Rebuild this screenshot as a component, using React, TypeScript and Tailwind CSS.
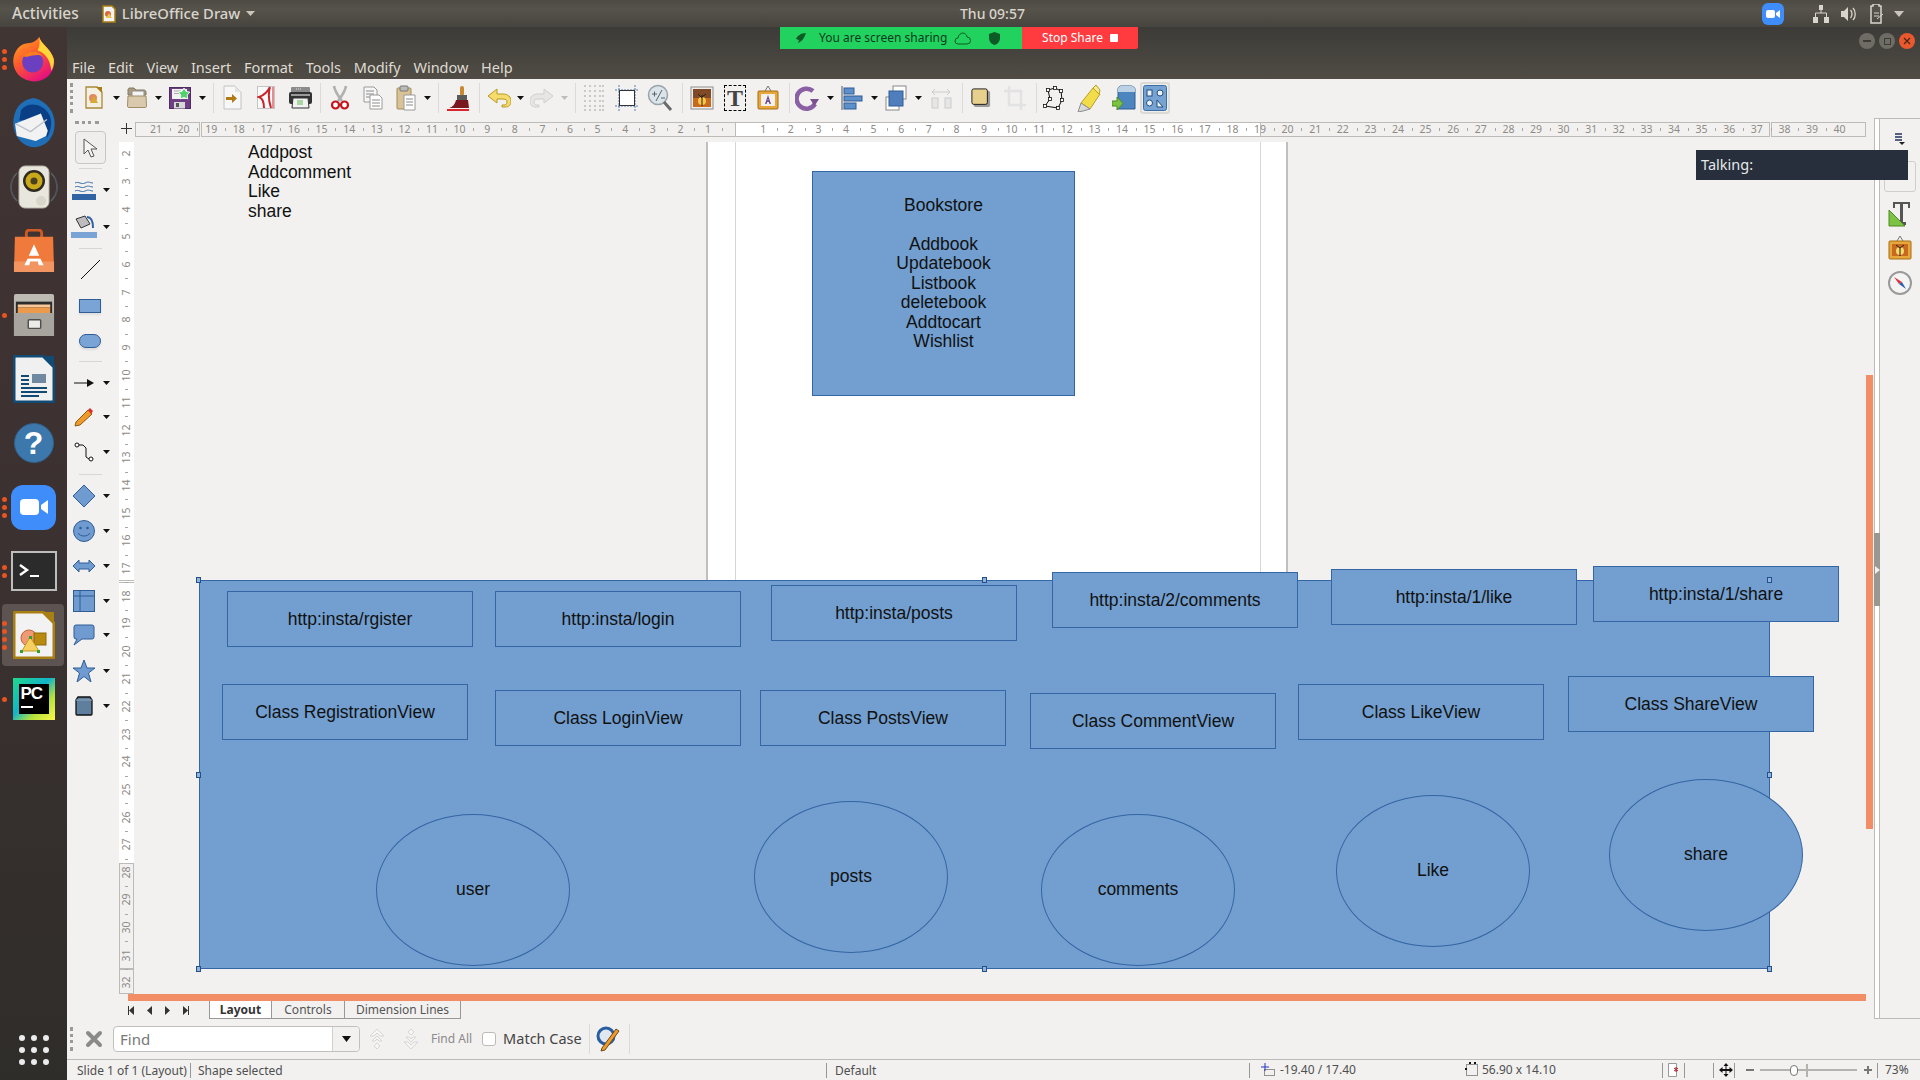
import type { ReactNode } from "react";

const UI = "font-['Noto_Sans',sans-serif]";

/* ---------- dock icons ---------- */
const Firefox = () => (
  <svg width="45" height="47" viewBox="0 0 54 58">
    <defs>
      <linearGradient id="ff" x1="0" y1="0" x2="0.6" y2="1">
        <stop offset="0" stopColor="#ffb01f" />
        <stop offset="0.5" stopColor="#ff5a2c" />
        <stop offset="1" stopColor="#e6127e" />
      </linearGradient>
    </defs>
    <path d="M34 1c1 8 14 14 18 27 3 14-8 28-24 28C13 56 2 45 2 31 2 20 10 9 20 9c6 0 11-3 14-8z" fill="url(#ff)" />
    <path d="M34 1c1 8 14 14 18 27 1 6-1 11-3 15-1-14-8-22-17-25 3-5 3-11 2-17z" fill="#ffd53a" />
    <circle cx="26" cy="32" r="13" fill="#6b3fbf" />
    <path d="M14 25c5-8 20-8 24 0-5-3-8-1-12-1s-7 3-12 1z" fill="#ff7b1f" />
  </svg>
);
const Thunderbird = () => (
  <svg width="48" height="50" viewBox="0 0 50 58">
    <path d="M25 0C9 2 1 14 1 29c0 16 12 29 26 28 13-1 22-12 22-27C49 16 40 4 25 0z" fill="#1f6fb8" />
    <path d="M10 14C18 4 34 6 42 18c5 8 3 20-2 28-1-12-9-22-32-20z" fill="#0a3f86" />
    <path d="M3 30l30-12 8 20-2 6-12 6-22-6z" fill="#f2f2f2" />
    <path d="M4 30l17 9 19-14" fill="none" stroke="#bcc3cc" strokeWidth="1.5" />
  </svg>
);
const Speaker = () => (
  <svg width="48" height="48" viewBox="0 0 48 48">
    <path d="M7 10c-8 8-8 20 0 28M41 10c8 8 8 20 0 28" fill="none" stroke="#5a6168" strokeWidth="1.500" />
    <path d="M4 14c-4 6-4 14 0 20M44 14c4 6 4 14 0 20" fill="none" stroke="#4c5056" />
    <rect x="9" y="3" width="30" height="42" rx="6" fill="#e9e7dd" stroke="#b8b4a8" />
    <circle cx="24" cy="18" r="11" fill="#2f2b1e" />
    <circle cx="24" cy="18" r="8.500" fill="#c9a91b" />
    <circle cx="24" cy="18" r="3.500" fill="#4a4120" />
    <circle cx="31" cy="38" r="5" fill="#d8d5cb" />
  </svg>
);
const Shop = () => (
  <svg width="42" height="44" viewBox="0 0 44 46">
    <path d="M14 10V4c0-2 2-3 4-3h8c2 0 4 1 4 3v6" fill="none" stroke="#cf5a23" strokeWidth="3" />
    <path d="M2 8h40l1 37H1z" fill="#ef7a3b" />
    <path d="M1 34h42v11H1z" fill="#f29560" />
    <path d="M22 16l-10 22h5l1-4h8l1 4h5z" fill="#fff" />
    <path d="M14 28h16v3H14z" fill="#ef7a3b" />
  </svg>
);
const Cabinet = () => (
  <svg width="42" height="44" viewBox="0 0 44 46">
    <rect x="1" y="1" width="42" height="44" rx="2" fill="#bdbab3" />
    <rect x="3" y="9" width="38" height="12" fill="#2c2c2c" />
    <rect x="5" y="12" width="34" height="3" fill="#f7c89a" />
    <rect x="5" y="15" width="34" height="6" fill="#ee9a4d" />
    <path d="M1 21h42v24H1z" fill="#a8a59e" />
    <rect x="16" y="28" width="13" height="9" rx="1" fill="#ecebe7" stroke="#4f4f4f" strokeWidth="1.5" />
  </svg>
);
const Writer = () => (
  <svg width="42" height="48" viewBox="0 0 42 48">
    <path d="M3 1h27l11 11v33a2 2 0 01-2 2H3a2 2 0 01-2-2V3a2 2 0 012-2z" fill="#f0f0f0" stroke="#114a75" strokeWidth="3" />
    <path d="M29 1h11a1 1 0 011 1v11z" fill="#114a75" />
    <rect x="19" y="19" width="14" height="9" fill="#6f8aa0" />
    <path d="M8 20h8v2H8zm0 4h8v2H8zm0 4h8v2H8zM8 32h26v2H8zm0 4h26v2H8zm0 4h18v2H8z" fill="#114a75" />
  </svg>
);
const Help = () => (
  <div className="w-[40px] h-[40px] rounded-full bg-[#3d78ad] border border-[#2f608c] flex items-center justify-center">
    <span className="text-white text-[32px] leading-none font-bold font-['Liberation_Sans',sans-serif]">?</span>
  </div>
);
const ZoomApp = () => (
  <div className="w-[45px] h-[45px] rounded-[12px] bg-[#3f8cfb] flex items-center justify-center">
    <svg width="28" height="18" viewBox="0 0 28 18">
      <rect x="0" y="1" width="19" height="16" rx="4" fill="#fff" />
      <path d="M21 7l7-5v14l-7-5z" fill="#fff" />
    </svg>
  </div>
);
const Terminal = () => (
  <div className="w-[46px] h-[40px] bg-[#2b2b2b] border-2 border-[#bdbdbd] flex items-center justify-start pl-[6px]">
    <svg width="24" height="16" viewBox="0 0 24 16">
      <path d="M1 2l7 5-7 5" fill="none" stroke="#fff" strokeWidth="2.4" />
      <path d="M11 13h9" stroke="#fff" strokeWidth="2" />
    </svg>
  </div>
);
const DrawApp = () => (
  <svg width="42" height="48" viewBox="0 0 42 48">
    <path d="M3 1h27l11 11v33a2 2 0 01-2 2H3a2 2 0 01-2-2V3a2 2 0 012-2z" fill="#f2f2f2" stroke="#a87f12" strokeWidth="3" />
    <path d="M29 1h11a1 1 0 011 1v11z" fill="#a87f12" />
    <circle cx="16" cy="27" r="8" fill="#ef9a74" stroke="#c2653c" />
    <rect x="21" y="22" width="12" height="12" fill="#b88a10" stroke="#8f6a08" />
    <path d="M17 26l9 14H9z" fill="#f6cf5e" stroke="#c49b22" />
    <path d="M16 25h3v3h-3zM7 39h3v3H7zM24 39h3v3h-3z" fill="#32a02c" />
  </svg>
);
const PyCharm = () => (
  <div className="w-[42px] h-[42px] bg-[linear-gradient(135deg,#21d789_0%,#12b5c9_45%,#b7e23b_70%,#fcf84a_100%)] flex items-center justify-center">
    <div className="w-[30px] h-[30px] bg-black flex flex-col pl-[2px] pt-px">
      <span className="text-white text-[17px] leading-[18px] font-bold tracking-[-1px] font-['Liberation_Sans',sans-serif]">PC</span>
      <div className="w-[12px] h-[2px] bg-white mt-[3px]" />
    </div>
  </div>
);

const DockItem = ({ dots = 0, active, children }: { dots?: number; active?: boolean; children: ReactNode }) => (
  <div className="relative h-[64px] flex items-center justify-center shrink-0">
    {active && <div className="absolute left-[2px] right-[3px] top-[1px] bottom-[1px] rounded-[4px] bg-[#5d5350]" />}
    <div className="absolute left-[2px] top-0 bottom-0 flex flex-col justify-center gap-[3px]">
      {Array.from({ length: dots }).map((_, i) => (
        <span key={i} className="w-[5px] h-[5px] rounded-full bg-[#e95420]" />
      ))}
    </div>
    <div className="relative">{children}</div>
  </div>
);

const Dock = () => (
  <div className="w-[67px] shrink-0 bg-[linear-gradient(180deg,#413534_0%,#3b3130_50%,#2f2d2a_100%)] flex flex-col">
    <DockItem dots={3}><Firefox /></DockItem>
    <DockItem><Thunderbird /></DockItem>
    <DockItem><Speaker /></DockItem>
    <DockItem><Shop /></DockItem>
    <DockItem dots={1}><Cabinet /></DockItem>
    <DockItem><Writer /></DockItem>
    <DockItem><Help /></DockItem>
    <DockItem dots={3}><ZoomApp /></DockItem>
    <DockItem dots={2}><Terminal /></DockItem>
    <DockItem dots={4} active><DrawApp /></DockItem>
    <DockItem dots={1}><PyCharm /></DockItem>
    <div className="mt-auto mb-[15px] mx-auto grid grid-cols-3 gap-x-[6px] gap-y-[6px]">
      {Array.from({ length: 9 }).map((_, i) => (
        <span key={i} className="w-[6px] h-[6px] rounded-full bg-[#ececec]" />
      ))}
    </div>
  </div>
);

/* ---------- small helpers ---------- */
const Caret = ({ light }: { light?: boolean }) => (
  <svg width="7" height="4" viewBox="0 0 7 4"><path d="M0 0h7L3.5 4z" fill={light ? "#bdbdbd" : "#111"} /></svg>
);
const Slot = ({ w, children }: { w: string; children?: ReactNode }) => (
  <div className={`flex items-center justify-center shrink-0 ${w}`}>{children}</div>
);
const Sep = ({ w }: { w: string }) => (
  <Slot w={w}><div className="w-px h-[30px] bg-[#dcdad7]" /></Slot>
);

/* ---------- toolbar icons ---------- */
const PageDraw = () => (
  <svg width="18" height="23" viewBox="0 0 18 23">
    <path d="M1 1h11l5 5v16H1z" fill="#f3efe2" stroke="#a88a3a" strokeWidth="1.300" />
    <path d="M11 1h6v6z" fill="#a87f12" />
    <circle cx="8" cy="12" r="4" fill="#e08a63" />
    <path d="M9 10l4 7H5z" fill="#d9a92f" />
  </svg>
);
const OpenIc = () => (
  <svg width="20" height="21" viewBox="0 0 20 21">
    <path d="M1 3c0-1 .5-2 1.500-2H7l2 2h8c1 0 2 1 2 2v3H1z" fill="#a89a80" stroke="#85785f" />
    <path d="M5 4h12v6H5z" fill="#f5f5f5" stroke="#8f8f8f" />
    <path d="M1 9h18l.5 10c0 1-.5 1.500-1.500 1.500H2C1 20.500.5 20 .5 19z" fill="#dac9ac" stroke="#a08c66" />
  </svg>
);
const SaveIc = () => (
  <svg width="22" height="22" viewBox="0 0 22 22">
    <rect x=".5" y=".5" width="21" height="21" fill="#6f3f83" stroke="#4f2c62" />
    <rect x="3" y="2" width="15" height="10" fill="#f2f2f2" />
    <path d="M5 4h7M5 6.500h5" stroke="#aaa" />
    <rect x="5" y="15" width="11" height="6.500" fill="#d8d8d8" />
    <rect x="7" y="16" width="3" height="4" fill="#555" />
    <path d="M15 1l2 3.400 3.800.7-2.600 2.900.5 3.900L15 10.400l-3.700 1.500.5-3.900-2.600-2.900 3.800-.7z" fill="#4fd36a" stroke="#fff" strokeWidth=".9" />
  </svg>
);
const ImportIc = () => (
  <svg width="19" height="25" viewBox="0 0 19 25">
    <path d="M1 1h11l6 6v17H1z" fill="#f7f7f7" stroke="#c2c2c2" />
    <path d="M12 1l6 6h-6z" fill="#e4e4e4" />
    <path d="M3 12h6V9l5 4.500L9 18v-3H3z" fill="#b17a12" />
  </svg>
);
const PdfIc = () => (
  <svg width="18" height="23" viewBox="0 0 18 23">
    <rect x=".5" y=".5" width="17" height="22" fill="#fafafa" stroke="#c4c4c4" />
    <path d="M13 1C11 5 8 9 2 11c3 1 5 4 5 11M13 1c-2 7-1 15 1 21" fill="none" stroke="#c9252a" strokeWidth="2" />
    <path d="M16 1v21" stroke="#c9252a" />
  </svg>
);
const PrintIc = () => (
  <svg width="25" height="23" viewBox="0 0 25 23">
    <rect x="3" y="1" width="19" height="6" rx="1" fill="#8c8c8c" />
    <path d="M8 3h6" stroke="#e0e0e0" strokeDasharray="1 1" />
    <rect x="1" y="6" width="23" height="12" rx="2" fill="#333" />
    <rect x="3" y="8" width="19" height="2" fill="#9a9a9a" />
    <path d="M5 12h15l1 10H4z" fill="#f2f2f2" stroke="#333" />
    <path d="M9 14h6v5H9z" fill="#a8d6a0" />
  </svg>
);
const CutIc = () => (
  <svg width="18" height="25" viewBox="0 0 18 25">
    <path d="M3 1c1 6 5 11 8 15M15 1c-1 6-5 11-8 15" fill="none" stroke="#b0b0b0" strokeWidth="2.600" />
    <circle cx="4.500" cy="20" r="3.500" fill="#fff" stroke="#c4161c" strokeWidth="2.200" />
    <circle cx="13.500" cy="20" r="3.500" fill="#fff" stroke="#c4161c" strokeWidth="2.200" />
  </svg>
);
const CopyIc = () => (
  <svg width="20" height="24" viewBox="0 0 20 24">
    <path d="M1 1h10l3 3v12H1z" fill="#f6f6f6" stroke="#9a9a9a" />
    <path d="M3 5h8M3 8h8M3 11h8" stroke="#8a8a8a" />
    <path d="M7 9h9l3 3v11H7z" fill="#fff" stroke="#9a9a9a" />
    <path d="M9 14h8M9 17h8M9 20h8" stroke="#8a8a8a" />
  </svg>
);
const PasteIc = () => (
  <svg width="20" height="26" viewBox="0 0 20 26">
    <rect x="1" y="3" width="14" height="21" rx="1" fill="#d9c295" stroke="#a58b54" />
    <rect x="4" y="1" width="8" height="5" rx="1" fill="#bbb" stroke="#777" />
    <path d="M8 10h11v15H8z" fill="#fff" stroke="#9a9a9a" />
    <path d="M10 14h7M10 17h7M10 20h7" stroke="#888" />
  </svg>
);
const BrushIc = () => (
  <svg width="24" height="26" viewBox="0 0 24 26">
    <rect x="14" y="1" width="4" height="10" rx="2" fill="#c9892e" />
    <rect x="11" y="10" width="10" height="5" fill="#5a5a5a" />
    <path d="M10 15h12l1 8H3c4-1 6-4 7-8z" fill="#7a1820" />
    <path d="M1 24h22v2H1z" fill="#d9262e" />
  </svg>
);
const UndoIc = ({ flip, dim }: { flip?: boolean; dim?: boolean }) => (
  <svg width="24" height="20" viewBox="0 0 24 20" className={flip ? "-scale-x-100" : ""}>
    <path
      d="M10 1L1 8l9 7v-4h6c3 0 4 1 4 3s-1 3-3 3h-2v2h3c4 0 6-2 6-6s-3-7-8-7h-6z"
      fill={dim ? "#e6e6e6" : "#f6dc6c"}
      stroke={dim ? "#cfcfcf" : "#b79a22"}
    />
  </svg>
);
const GridIc = () => (
  <svg width="20" height="26" viewBox="0 0 20 26">
    {[1, 6, 11, 16, 21, 25].map((y) => [1, 6, 11, 16, 19].map((x) => <rect key={`${x}-${y}`} x={x - 0.5} y={y - 0.5} width="1" height="1" fill="#555" />))}
  </svg>
);
const HelpLinesIc = () => (
  <svg width="24" height="26" viewBox="0 0 24 26">
    <path d="M4 0v26M20 0v26M0 5h24M0 21h24" stroke="#5b7fb3" strokeDasharray="2 1" />
    <rect x="4.500" y="5.500" width="15" height="15" fill="#fff" stroke="#333" />
  </svg>
);
const ZoomIc = () => (
  <svg width="26" height="28" viewBox="0 0 26 28">
    <circle cx="11" cy="11" r="9.500" fill="#dbe4ea" stroke="#98a3aa" strokeWidth="1.500" />
    <path d="M5 10h5M7.500 7.500v5M14 14h4M9 17l6-11" stroke="#5a6368" />
    <path d="M17 18l7 8" stroke="#6a6a6a" strokeWidth="3" />
  </svg>
);
const ImageIc = () => (
  <svg width="24" height="24" viewBox="0 0 24 24">
    <rect x="1" y="1" width="22" height="22" fill="#eee" stroke="#8d8d8d" />
    <rect x="3" y="3" width="18" height="18" fill="#c76a1e" />
    <rect x="3" y="3" width="18" height="9" fill="#7f4a25" />
    <circle cx="12" cy="15" r="4" fill="#f7c64d" />
    <path d="M12 20V9M12 12l-4-4M12 11l4-3" stroke="#2d1d10" />
  </svg>
);
const TextIc = () => (
  <div className="w-[22px] h-[26px] border border-dashed border-black flex items-center justify-center">
    <span className="text-[24px] leading-none font-bold text-[#444] font-['Liberation_Serif',serif]">T</span>
  </div>
);
const FontworkIc = () => (
  <svg width="22" height="24" viewBox="0 0 22 24">
    <path d="M11 0l-3 5M11 0l3 5" stroke="#777" />
    <rect x="1" y="5" width="20" height="18" rx="1" fill="#e7a73c" stroke="#a56c12" />
    <rect x="4" y="8" width="14" height="12" fill="#f4f1ea" />
    <path d="M11 9l-3 9h1.500l.7-2h1.600l.7 2H14zm-.4 5.600l.4-2 .4 2z" fill="#6a4a98" />
  </svg>
);
const RotateIc = () => (
  <svg width="24" height="26" viewBox="0 0 24 26">
    <path d="M20 19a10 10 0 11-2-13" fill="none" stroke="#8a5fa3" strokeWidth="4.500" />
    <path d="M15 14h9l-4.500 7z" fill="#7c4f93" />
  </svg>
);
const AlignIc = () => (
  <svg width="22" height="24" viewBox="0 0 22 24">
    <path d="M1 0v24" stroke="#555" />
    <rect x="3" y="2" width="10" height="6" fill="#5d8fc9" stroke="#2f5d97" />
    <rect x="3" y="10" width="18" height="5" fill="#5d8fc9" stroke="#2f5d97" />
    <rect x="3" y="17" width="12" height="6" fill="#5d8fc9" stroke="#2f5d97" />
  </svg>
);
const ArrangeIc = () => (
  <svg width="22" height="26" viewBox="0 0 22 26">
    <rect x="8" y="1" width="13" height="13" fill="#fff" stroke="#888" />
    <rect x="1" y="12" width="13" height="13" fill="#fff" stroke="#888" />
    <rect x="4" y="6" width="14" height="15" fill="#4e7fbc" stroke="#2f5d97" />
  </svg>
);
const DistIc = () => (
  <svg width="24" height="24" viewBox="0 0 24 24">
    <path d="M3 6h18M3 6l3-3M3 6l3 3M21 6l-3-3M21 6l-3 3" stroke="#ccc" fill="none" />
    <rect x="3" y="12" width="6" height="10" fill="#e6e6e6" stroke="#ccc" />
    <rect x="16" y="12" width="6" height="10" fill="#e6e6e6" stroke="#ccc" />
  </svg>
);
const ShadowIc = () => (
  <svg width="22" height="22" viewBox="0 0 22 22">
    <rect x="3" y="3" width="18" height="18" rx="2" fill="#9a9a9a" />
    <rect x="1" y="1" width="17" height="17" rx="2" fill="#e7d08e" stroke="#111" />
  </svg>
);
const CropIc = () => (
  <svg width="22" height="24" viewBox="0 0 22 24">
    <path d="M5 0v19h17M0 5h17v19" fill="none" stroke="#e2e2e2" strokeWidth="2.500" />
  </svg>
);
const PointsIc = () => (
  <svg width="22" height="24" viewBox="0 0 22 24">
    <path d="M5 4l7-2 6 3 1 9-4 8-13-2 5-7z" fill="none" stroke="#111" />
    {[[5, 4], [12, 2], [18, 5], [19, 14], [15, 22], [2, 20], [7, 13]].map(([x, y]) => (
      <rect key={`${x}${y}`} x={x - 1.5} y={y - 1.5} width="3" height="3" fill="#fff" stroke="#111" strokeWidth=".8" />
    ))}
  </svg>
);
const GlueIc = () => (
  <svg width="24" height="28" viewBox="0 0 24 28">
    <path d="M4 19L16 4l7 6-10 15z" fill="#f2dc4a" stroke="#b79f22" />
    <path d="M16 4l3-3 4 5-1 4z" fill="#f6ea8e" stroke="#b79f22" />
    <path d="M4 19l9 6-7 2-5 1z" fill="#d9d9d9" stroke="#8c8c8c" />
  </svg>
);
const ExtrudeIc = () => (
  <svg width="24" height="26" viewBox="0 0 24 26">
    <path d="M6 4c0-2 2-3 3-3h10c2 0 4 2 4 3v20H6z" fill="#4d86bf" stroke="#2e5f93" />
    <path d="M6 4c0-2 2-3 3-3h10c2 0 4 2 4 3v3H6z" fill="#bcd1e4" />
    <path d="M0 16h5v-4l6 6.500L5 25v-4H0z" fill="#7cc243" stroke="#4f8a20" />
  </svg>
);
const ShapesToggle = () => (
  <div className="w-[30px] h-[32px] rounded-[3px] border-2 border-[#dcdad6] bg-[#eeeeec] flex items-center justify-center shrink-0">
    <svg width="24" height="26" viewBox="0 0 24 26">
      <rect x=".5" y=".5" width="23" height="25" rx="2" fill="#77a3d3" stroke="#3b6ea7" />
      <rect x="4" y="5" width="5" height="6" fill="#eaf1f8" stroke="#234d7d" />
      <circle cx="17" cy="8" r="3" fill="#eaf1f8" stroke="#234d7d" />
      <circle cx="6.500" cy="18" r="3" fill="#eaf1f8" stroke="#234d7d" />
      <path d="M14 22l0-7 6 7z" fill="#eaf1f8" stroke="#234d7d" />
    </svg>
  </div>
);

const MainToolbar = () => (
  <div className="h-[39px] shrink-0 bg-[#f2f1f0] flex items-center pb-[2px]">
    <div className="ml-[3px] mr-[7px] w-[4px] h-[30px] border-l-[3px] border-dotted border-[#9c9a97]" />
    <Slot w="w-[26px]"><PageDraw /></Slot>
    <Slot w="w-[18px]"><Caret /></Slot>
    <Slot w="w-[24px]"><OpenIc /></Slot>
    <Slot w="w-[18px]"><Caret /></Slot>
    <Slot w="w-[26px]"><SaveIc /></Slot>
    <Slot w="w-[18px]"><Caret /></Slot>
    <Sep w="w-[4px]" />
    <Slot w="w-[34px]"><ImportIc /></Slot>
    <Slot w="w-[34px]"><PdfIc /></Slot>
    <Slot w="w-[34px]"><PrintIc /></Slot>
    <Sep w="w-[6px]" />
    <Slot w="w-[34px]"><CutIc /></Slot>
    <Slot w="w-[32px]"><CopyIc /></Slot>
    <Slot w="w-[34px]"><PasteIc /></Slot>
    <Slot w="w-[8px]"><Caret /></Slot>
    <Sep w="w-[14px]" />
    <Slot w="w-[26px]"><BrushIc /></Slot>
    <Sep w="w-[16px]" />
    <Slot w="w-[24px]"><UndoIc /></Slot>
    <Slot w="w-[18px]"><Caret /></Slot>
    <Slot w="w-[26px]"><UndoIc flip dim /></Slot>
    <Slot w="w-[18px]"><Caret light /></Slot>
    <Sep w="w-[4px]" />
    <Slot w="w-[34px]"><GridIc /></Slot>
    <Slot w="w-[32px]"><HelpLinesIc /></Slot>
    <Slot w="w-[34px]"><ZoomIc /></Slot>
    <Sep w="w-[10px]" />
    <Slot w="w-[30px]"><ImageIc /></Slot>
    <Slot w="w-[36px]"><TextIc /></Slot>
    <Slot w="w-[30px]"><FontworkIc /></Slot>
    <Sep w="w-[12px]" />
    <Slot w="w-[24px]"><RotateIc /></Slot>
    <Slot w="w-[22px]"><Caret /></Slot>
    <Slot w="w-[22px]"><AlignIc /></Slot>
    <Slot w="w-[22px]"><Caret /></Slot>
    <Slot w="w-[22px]"><ArrangeIc /></Slot>
    <Slot w="w-[22px]"><Caret /></Slot>
    <Slot w="w-[24px]"><DistIc /></Slot>
    <Sep w="w-[18px]" />
    <Slot w="w-[20px]"><ShadowIc /></Slot>
    <div className="w-[4px]" />
    <Slot w="w-[40px]"><CropIc /></Slot>
    <Sep w="w-[2px]" />
    <Slot w="w-[34px]"><PointsIc /></Slot>
    <Slot w="w-[36px]"><GlueIc /></Slot>
    <Slot w="w-[34px]"><ExtrudeIc /></Slot>
    <Slot w="w-[28px]"><ShapesToggle /></Slot>
  </div>
);

/* ---------- left drawing toolbar ---------- */
const blueFill = "#6f9bd0";
const blueLine = "#2f5d97";
const Row = ({ h, arrow, children }: { h: string; arrow?: boolean; children?: ReactNode }) => (
  <div className={`flex items-center shrink-0 ${h}`}>
    <div className="w-[34px] flex justify-center">{children}</div>
    {arrow && <div className="w-[10px] flex justify-center"><Caret /></div>}
  </div>
);
// plain shape tools have no dropdown, so they sit further right than the others
const MidRow = ({ h, children }: { h: string; children?: ReactNode }) => (
  <div className={`flex items-center shrink-0 ${h}`}>
    <div className="w-[46px] flex justify-center">{children}</div>
  </div>
);
const VSep = ({ h }: { h: string }) => (
  <div className={`flex items-center shrink-0 ${h}`}><div className="ml-[12px] w-[23px] h-px bg-[#d8d6d3]" /></div>
);

const DrawToolbar = () => (
  <div className="w-[52px] shrink-0 flex flex-col pt-[3px] bg-[#f2f1f0]">
    <div className="ml-[8px] w-[24px] h-[3px] mb-[7px] border-t-[3px] border-dotted border-[#9c9a97]" />
    <MidRow h="h-[33px]">
      <div className="w-[31px] h-[33px] rounded-[4px] border border-[#c9c7c3] bg-[#efeeec] flex items-center justify-center shrink-0">
        <svg width="16" height="20" viewBox="0 0 16 20"><path d="M2 1v15l4-4 3 7 3-1-3-7h6z" fill="#f5f5f5" stroke="#555" /></svg>
      </div>
    </MidRow>
    <VSep h="h-[8px]" />
    <Row h="h-[36px]" arrow>
      <svg width="24" height="20" viewBox="0 0 24 20">
        <path d="M3 3c4-2 6 2 10 0s5 0 8 0M3 7c4-2 6 2 10 0s5 0 8 0M3 11c4-2 6 2 10 0s5 0 8 0" fill="none" stroke="#3a6ea8" />
        <rect y="14" width="24" height="6" fill="#2f63a3" />
      </svg>
    </Row>
    <Row h="h-[38px]" arrow>
      <svg width="26" height="24" viewBox="0 0 26 24">
        <path d="M5 4l9-3 5 8-9 4z" fill="#bdbdbd" stroke="#333" />
        <path d="M16 2c4 0 6 4 6 11" fill="none" stroke="#2f63a3" strokeWidth="2" />
        <rect y="17" width="26" height="6" fill="#7aa3d6" />
      </svg>
    </Row>
    <VSep h="h-[4px]" />
    <MidRow h="h-[38px]">
      <svg width="19" height="19" viewBox="0 0 19 19"><path d="M0 19L19 0" stroke="#111" /></svg>
    </MidRow>
    <MidRow h="h-[35px]">
      <div className="w-[22px] h-[14px] bg-[#7ba4d6] border border-[#2f5d97] shadow-[0_2px_2px_#ddd]" />
    </MidRow>
    <MidRow h="h-[36px]">
      <div className="w-[22px] h-[14px] rounded-full bg-[#7ba4d6] border border-[#2f5d97] shadow-[0_2px_2px_#ddd]" />
    </MidRow>
    <VSep h="h-[4px]" />
    <Row h="h-[40px]" arrow>
      <svg width="20" height="8" viewBox="0 0 20 8"><path d="M0 4h14" stroke="#111" /><path d="M13 0l7 4-7 4z" fill="#111" /></svg>
    </Row>
    <Row h="h-[28px]" arrow>
      <svg width="20" height="20" viewBox="0 0 20 20">
        <path d="M2 15L14 3l4 4L6 18l-5 1z" fill="#f09a2b" stroke="#8a5a12" />
        <path d="M14 3l2-2 3 3-2 3z" fill="#d9302e" />
      </svg>
    </Row>
    <Row h="h-[42px]" arrow>
      <svg width="20" height="20" viewBox="0 0 20 20">
        <path d="M5 3h4l3 3v9l3 2" fill="none" stroke="#111" />
        <rect x="1" y="1" width="4" height="4" rx="2" fill="#fff" stroke="#111" />
        <rect x="15" y="15" width="4" height="4" rx="2" fill="#fff" stroke="#111" />
      </svg>
    </Row>
    <VSep h="h-[2px]" />
    <Row h="h-[42px]" arrow>
      <svg width="22" height="22" viewBox="0 0 22 22"><path d="M11 0l11 11-11 11L0 11z" fill={blueFill} stroke={blueLine} /></svg>
    </Row>
    <Row h="h-[28px]" arrow>
      <svg width="22" height="22" viewBox="0 0 22 22">
        <circle cx="11" cy="11" r="10.500" fill={blueFill} stroke={blueLine} />
        <circle cx="7.500" cy="8" r="1.300" fill={blueLine} />
        <circle cx="14.500" cy="8" r="1.300" fill={blueLine} />
        <path d="M5 13c2 4 10 4 12 0" fill="none" stroke={blueLine} />
      </svg>
    </Row>
    <Row h="h-[42px]" arrow>
      <svg width="22" height="14" viewBox="0 0 22 14"><path d="M0 7l6-6v3h10V1l6 6-6 6v-3H6v3z" fill={blueFill} stroke={blueLine} /></svg>
    </Row>
    <Row h="h-[28px]" arrow>
      <svg width="22" height="22" viewBox="0 0 22 22">
        <rect x=".5" y=".5" width="21" height="21" fill={blueFill} stroke={blueLine} />
        <path d="M.5 6h21M7 .5v21" stroke={blueLine} />
      </svg>
    </Row>
    <Row h="h-[40px]" arrow>
      <svg width="22" height="22" viewBox="0 0 22 22"><path d="M3 1h16a2 2 0 012 2v10a2 2 0 01-2 2H9l-8 6 3-6H3a2 2 0 01-2-2V3a2 2 0 012-2z" fill={blueFill} stroke={blueLine} /></svg>
    </Row>
    <Row h="h-[32px]" arrow>
      <svg width="22" height="22" viewBox="0 0 22 22"><path d="M11 0l3 8h8l-6.500 5 2.500 9-7-5.500L4 22l2.500-9L0 8h8z" fill={blueFill} stroke={blueLine} /></svg>
    </Row>
    <Row h="h-[38px]" arrow>
      <svg width="18" height="20" viewBox="0 0 18 20">
        <path d="M3 1h12l2 3v14a1 1 0 01-1 1H2a1 1 0 01-1-1V4z" fill="#5f7f9f" stroke="#111" strokeWidth="1.300" />
        <path d="M1 4h16" stroke="#8ea6bd" />
      </svg>
    </Row>
  </div>
);

/* ---------- rulers ---------- */
const hNums = Array.from({ length: 62 }, (_, i) => i - 21).filter((n) => n !== 0);
const vNums = Array.from({ length: 31 }, (_, i) => i + 2);

const HRuler = () => (
  <div className="h-[20px] shrink-0 flex">
    <div className="w-[16px] shrink-0 relative">
      <div className="absolute left-[2px] top-[6px] w-[11px] h-px bg-[#333]" />
      <div className="absolute left-[7px] top-px w-px h-[11px] bg-[#333]" />
    </div>
    <div className="w-[1731px] shrink-0 relative h-[15px]">
      <div className="absolute inset-0 flex">
        <div className="w-[65px] border border-[#bdbbb8]" />
        <div className="w-[535px] ml-px border border-[#bdbbb8]" />
        <div className="w-[524px] bg-white border-y border-[#bdbbb8]" />
        <div className="w-[510px] border border-[#bdbbb8]" />
        <div className="w-[95px] ml-[1px] border border-[#bdbbb8]" />
      </div>
      {hNums.map((n) => (
        <span
          key={n}
          className="absolute top-0 w-[20px] -ml-[10px] text-center text-[10.5px] leading-[15px] text-[#8e8a86]"
          style={{ left: 600.6 + 27.6 * n }}
        >
          {Math.abs(n)}
        </span>
      ))}
      {hNums.slice(0, -1).map((n) => (
        <span key={n} className="absolute top-[6px] w-px h-[3px] bg-[#a9a7a4]" style={{ left: 600.6 + 27.6 * n + 13.8 }} />
      ))}
    </div>
  </div>
);

const VRuler = () => (
  <div className="w-[15px] shrink-0 relative overflow-hidden">
    <div className="absolute inset-0 flex flex-col">
      <div className="h-[721px] bg-white" />
      <div className="h-[106px] border border-[#bdbbb8]" />
      <div className="h-[25px] border border-[#bdbbb8]" />
    </div>
    <div className="absolute left-0 right-0 top-[438px] h-px bg-[#bdbbb8]" />
    <div className="absolute left-0 right-0 top-[440px] h-px bg-[#bdbbb8]" />
    {vNums.map((n) => (
      <span
        key={n}
        className="absolute left-0 w-[15px] h-[15px] -mt-[7.500px] -rotate-90 text-center text-[10.5px] leading-[15px] text-[#8e8a86]"
        style={{ top: -43.3 + 27.63 * n }}
      >
        {n}
      </span>
    ))}
    {vNums.map((n) => (
      <span key={n} className="absolute left-[6px] w-[3px] h-px bg-[#a9a7a4]" style={{ top: -43.3 + 27.63 * n + 13.8 }} />
    ))}
  </div>
);

/* ---------- slide canvas ---------- */
const rects = [
  { t: "http:insta/rgister", c: "left-[93px] top-[449px]" },
  { t: "http:insta/login", c: "left-[361px] top-[449px]" },
  { t: "http:insta/posts", c: "left-[637px] top-[443px]" },
  { t: "http:insta/2/comments", c: "left-[918px] top-[430px]" },
  { t: "http:insta/1/like", c: "left-[1197px] top-[427px]" },
  { t: "http:insta/1/share", c: "left-[1459px] top-[424px]" },
  { t: "Class RegistrationView", c: "left-[88px] top-[542px]" },
  { t: "Class LoginView", c: "left-[361px] top-[548px]" },
  { t: "Class PostsView", c: "left-[626px] top-[548px]" },
  { t: "Class CommentView", c: "left-[896px] top-[551px]" },
  { t: "Class LikeView", c: "left-[1164px] top-[542px]" },
  { t: "Class ShareView", c: "left-[1434px] top-[534px]" },
];
const ovals = [
  { t: "user", c: "left-[242px] top-[672px]" },
  { t: "posts", c: "left-[620px] top-[659px]" },
  { t: "comments", c: "left-[907px] top-[672px]" },
  { t: "Like", c: "left-[1202px] top-[653px]" },
  { t: "share", c: "left-[1475px] top-[637px]" },
];
const handles = [
  "left-[62px] top-[435px]",
  "left-[848px] top-[435px]",
  "left-[1633px] top-[435px]",
  "left-[62px] top-[630px]",
  "left-[1633px] top-[630px]",
  "left-[62px] top-[824px]",
  "left-[848px] top-[824px]",
  "left-[1633px] top-[824px]",
];

const Canvas = () => (
  <div className="relative flex-1 overflow-hidden font-['Liberation_Sans',sans-serif] text-[17.5px] leading-[19.5px] text-[#111]">
    <div className="absolute left-[572px] top-0 w-[582px] h-[440px] bg-white border-x-2 border-[#c0bfbd]">
      <div className="absolute left-[27px] top-0 bottom-0 w-px bg-[#d6d6d6]" />
      <div className="absolute right-[25px] top-0 bottom-0 w-px bg-[#d6d6d6]" />
    </div>
    <div className="absolute left-[114px] top-px">
      <div>Addpost</div>
      <div>Addcomment</div>
      <div>Like</div>
      <div>share</div>
    </div>
    <div className="absolute left-[678px] top-[29px] w-[263px] h-[225px] bg-[#729fcf] border border-[#3465a4] flex flex-col items-center justify-center">
      <div>Bookstore</div>
      <div className="h-[19.5px]" />
      <div>Addbook</div>
      <div>Updatebook</div>
      <div>Listbook</div>
      <div>deletebook</div>
      <div>Addtocart</div>
      <div>Wishlist</div>
      <div className="h-[19.5px]" />
    </div>
    <div className="absolute left-[65px] top-[438px] w-[1571px] h-[389px] bg-[#729fcf] border border-[#3465a4]" />
    {rects.map((r) => (
      <div key={r.t} className={`absolute w-[246px] h-[56px] pt-px bg-[#729fcf] border border-[#3465a4] flex items-center justify-center ${r.c}`}>
        {r.t}
      </div>
    ))}
    {ovals.map((o) => (
      <div key={o.t} className={`absolute w-[194px] h-[152px] rounded-[50%] bg-[#729fcf] border border-[#3465a4] flex items-center justify-center ${o.c}`}>
        {o.t}
      </div>
    ))}
    {handles.map((h) => (
      <div key={h} className={`absolute w-[5px] h-[6px] bg-[#8fb3da] border border-[#234f8a] ${h}`} />
    ))}
  </div>
);

/* ---------- bottom rows ---------- */
const TabBar = () => (
  <div className={`h-[18px] shrink-0 flex items-start text-[12px] ${UI}`}>
    <div className="ml-[9px] w-[81px] flex items-center gap-[13px] h-[18px]">
      <svg width="6" height="9" viewBox="0 0 6 9"><path d="M0 0h1v9H0zM6 0v9L1 4.500z" fill="#333" /></svg>
      <svg width="5" height="9" viewBox="0 0 5 9"><path d="M5 0v9L0 4.500z" fill="#333" /></svg>
      <svg width="5" height="9" viewBox="0 0 5 9"><path d="M0 0v9l5-4.500z" fill="#333" /></svg>
      <svg width="6" height="9" viewBox="0 0 6 9"><path d="M5 0h1v9H5zM0 0v9l5-4.500z" fill="#333" /></svg>
    </div>
    <div className="w-[63px] h-[18px] bg-white border-x border-b border-[#9a9896] flex items-center justify-center font-bold text-[#333]">Layout</div>
    <div className="w-[73px] h-[18px] border-r border-b border-[#9a9896] flex items-center justify-center text-[#555]">Controls</div>
    <div className="w-[116px] h-[18px] border-r border-b border-[#9a9896] flex items-center justify-center text-[#555]">Dimension Lines</div>
  </div>
);

const Sidebar = () => (
  <div className="w-[46px] shrink-0 flex border-t border-b border-[#bdbbb8] bg-[#f2f1f0]">
    <div className="w-[6px] shrink-0 bg-white border-x border-[#bdbbb8] relative">
      <div className="absolute left-[-1px] right-[-1px] top-[414px] h-[73px] bg-[#9a9690] flex items-center justify-center">
        <svg width="5" height="8" viewBox="0 0 5 8"><path d="M0 0l5 4-5 4z" fill="#f2f1f0" /></svg>
      </div>
    </div>
    <div className="flex-1 flex flex-col items-center">
      <svg className="mt-[14px]" width="12" height="12" viewBox="0 0 12 12">
        <path d="M1 1h7M1 4h7M1 7h7" stroke="#23305c" strokeWidth="1.300" />
        <path d="M5 9h6l-3 3z" fill="#222" />
      </svg>
      <div className="mt-[16px] w-[32px] h-[31px] rounded-[3px] border border-[#d0cecb]" />
      <svg className="mt-[9px]" width="24" height="26" viewBox="0 0 24 26">
        <path d="M5 1h17v6h-2V3h-5v18h3v3H9v-3h3V3H7v4H5z" fill="#555" />
        <path d="M1 25V9l16 16z" fill="#7cc243" stroke="#4f8a20" />
      </svg>
      <svg className="mt-[9px]" width="24" height="24" viewBox="0 0 24 24">
        <path d="M12 0l-3 5M12 0l3 5" stroke="#777" />
        <rect x="1" y="5" width="22" height="18" rx="1" fill="#e7a73c" stroke="#a56c12" />
        <rect x="4" y="8" width="16" height="12" fill="#c76a1e" />
        <circle cx="12" cy="15" r="4" fill="#f7d96d" />
        <path d="M12 20v-8M12 12l-4-3M12 12l4-3" stroke="#2d1d10" />
      </svg>
      <svg className="mt-[11px]" width="24" height="24" viewBox="0 0 24 24">
        <circle cx="12" cy="12" r="11" fill="#f4f4f4" stroke="#9a9a9a" strokeWidth="2" />
        <path d="M6 6l8 5-3 2z" fill="#e0343a" />
        <path d="M18 18l-7-5 3-2z" fill="#2f5fb3" />
      </svg>
    </div>
  </div>
);

const FindBar = () => (
  <div className={`h-[40px] shrink-0 bg-[#f2f1f0] flex items-center ${UI}`}>
    <div className="ml-[3px] w-[3px] h-[24px] border-l-[3px] border-dotted border-[#9c9a97]" />
    <svg className="ml-[12px]" width="18" height="18" viewBox="0 0 18 18">
      <path d="M3 3l12 12M15 3L3 15" stroke="#8a8a8a" strokeWidth="4" strokeLinecap="round" />
    </svg>
    <div className="ml-[10px] w-[247px] h-[26px] rounded-[4px] border border-[#c2c0bd] bg-white flex">
      <span className="flex-1 pl-[6px] text-[15px] leading-[24px] text-[#777]">Find</span>
      <div className="w-[27px] border-l border-[#d2d0cd] bg-[#f2f1f0] rounded-r-[4px] flex items-center justify-center">
        <svg width="9" height="6" viewBox="0 0 9 6"><path d="M0 0h9L4.500 6z" fill="#111" /></svg>
      </div>
    </div>
    <svg className="ml-[9px]" width="16" height="22" viewBox="0 0 16 22">
      <path d="M8 1l7 7h-4l-3-3-3 3H1zM8 8l5 5h-3l-2-2-2 2H3zM8 15l3 3-3 3-3-3z" fill="#f5f5f5" stroke="#d6d6d6" />
    </svg>
    <svg className="ml-[18px]" width="16" height="22" viewBox="0 0 16 22">
      <path d="M8 21l7-7h-4l-3 3-3-3H1zM8 14l5-5h-3l-2 2-2-2H3zM8 7l3-3-3-3-3 3z" fill="#f5f5f5" stroke="#d6d6d6" />
    </svg>
    <span className="ml-[12px] text-[12px] text-[#8a8a8a]">Find All</span>
    <div className="ml-[10px] w-[14px] h-[14px] rounded-[3px] border border-[#bdbbb8] bg-white" />
    <span className="ml-[7px] text-[14.5px] text-[#444]">Match Case</span>
    <div className="ml-[7px] w-px h-[30px] bg-[#dcdad7]" />
    <svg className="ml-[6px]" width="24" height="26" viewBox="0 0 24 26">
      <circle cx="10" cy="10" r="8" fill="#dfe8f2" stroke="#2a5d9f" strokeWidth="3" />
      <path d="M6 22l14-19 3 2-14 19-4 1z" fill="#f09a2b" stroke="#6a4a18" />
    </svg>
    <div className="ml-[9px] w-px h-[30px] bg-[#dcdad7]" />
  </div>
);

const StatusBar = () => (
  <div className={`h-[21px] shrink-0 bg-[#f2f1f0] border-t border-[#bdbbb8] flex items-center text-[12px] text-[#4f4f4f] ${UI}`}>
    <span className="w-[124px] pl-[10px] border-r border-[#9a9896] h-[15px] leading-[15px]">Slide 1 of 1 (Layout)</span>
    <span className="w-[636px] pl-[7px] border-r border-[#9a9896] h-[15px] leading-[15px]">Shape selected</span>
    <span className="w-[423px] pl-[8px] border-r border-[#9a9896] h-[15px] leading-[15px]">Default</span>
    <div className="w-[215px] pl-[11px] flex items-center gap-[5px]">
      <svg width="14" height="14" viewBox="0 0 14 14">
        <path d="M4 0v8M0 4h8" stroke="#2233cc" />
        <rect x="3.500" y="6.500" width="10" height="6" fill="none" stroke="#333" strokeDasharray="1 1" />
      </svg>
      <span>-19.40 / 17.40</span>
    </div>
    <div className="w-[197px] flex items-center gap-[3px]">
      <svg width="14" height="16" viewBox="0 0 14 16">
        <rect x="1.500" y="2.500" width="11" height="11" fill="none" stroke="#333" strokeDasharray="1 1" />
        <path d="M4 0h2v2H4zM9 0h2v2H9zM0 6h2v2H0z" fill="#111" />
      </svg>
      <span>56.90 x 14.10</span>
    </div>
    <div className="w-[23px] h-[15px] border-x border-[#9a9896] flex items-center justify-center">
      <svg width="11" height="14" viewBox="0 0 11 14">
        <path d="M.5.5h8v13h-8z" fill="#fff" stroke="#999" />
        <path d="M8 4v5M6 5l4 3M10 5L6 8" stroke="#b3202a" />
      </svg>
    </div>
    <div className="w-[28px]" />
    <div className="w-[22px] h-[15px] border-x border-[#9a9896] flex items-center justify-center pl-[3px]">
      <svg width="14" height="14" viewBox="0 0 14 14">
        <path d="M7 0l2.500 3h-2v3h3V4L14 7l-3.500 3V8h-3v3h2L7 14l-2.500-3h2V8h-3v2L0 7l3.500-3v2h3V3h-2z" fill="#111" />
      </svg>
    </div>
    <div className="w-[143px] h-[15px] flex items-center relative border-r border-[#9a9896]">
      <div className="ml-[11px] w-[8px] h-[2px] bg-[#777]" />
      <div className="ml-[6px] w-[97px] h-[2px] bg-[#b5b3b0]" />
      <div className="ml-[7px] w-[8px] h-[2px] bg-[#777]" />
      <div className="absolute left-[132px] top-[3.500px] w-[2px] h-[8px] bg-[#777]" />
      <div className="absolute left-[71px] top-[1px] w-[2px] h-[13px] bg-[#b5b3b0]" />
      <div className="absolute left-[55px] top-[2px] w-[8px] h-[11px] rounded-full bg-white border border-[#777]" />
    </div>
    <span className="pl-[7px]">73%</span>
  </div>
);

/* ---------- chrome ---------- */
const TopBar = () => (
  <div className={`h-[27px] shrink-0 bg-[linear-gradient(180deg,#4c4a43_0%,#56534b_35%,#46443e_100%)] relative flex items-center text-[14.8px] text-[#d9d5cc] font-medium ${UI}`}>
    <span className="ml-[12px] text-[15.5px]">Activities</span>
    <svg className="ml-[23px]" width="14" height="18" viewBox="0 0 14 18">
      <path d="M1 1h9l3 3v13H1z" fill="#f3f3f3" stroke="#a87f12" strokeWidth="1.500" />
      <circle cx="6" cy="9" r="3" fill="#d9663a" />
      <path d="M7 8l3 5H4z" fill="#e8c24a" />
    </svg>
    <span className="ml-[6px]">LibreOffice Draw</span>
    <svg className="ml-[6px]" width="9" height="5" viewBox="0 0 9 5"><path d="M0 0h9L4.500 5z" fill="#c9c5bc" /></svg>
    <span className="absolute left-[960px] top-[3px] text-[14px] text-[#d9d5cc]">Thu 09:57</span>
    <div className="ml-auto flex items-center">
      <div className="w-[22px] h-[22px] rounded-[6px] bg-[#3f8cfb] flex items-center justify-center">
        <svg width="14" height="10" viewBox="0 0 14 10"><rect y="1" width="9" height="8" rx="2" fill="#fff" /><path d="M10 4l4-3v8l-4-3z" fill="#fff" /></svg>
      </div>
      <svg className="ml-[29px]" width="16" height="18" viewBox="0 0 16 18">
        <path d="M6 0h4v5H6zM0 12h5v6H0zM11 12h5v6h-5z" fill="#d9d5cc" />
        <path d="M8 5v3M2.500 12V8h11v4" fill="none" stroke="#d9d5cc" />
      </svg>
      <svg className="ml-[12px]" width="16" height="16" viewBox="0 0 16 16">
        <path d="M0 5h3l4-4v14l-4-4H0z" fill="#d9d5cc" />
        <path d="M9.500 4c2 2 2 6 0 8M12 2c3 3 3 9 0 12" fill="none" stroke="#d9d5cc" strokeWidth="1.300" />
      </svg>
      <svg className="ml-[13px]" width="14" height="20" viewBox="0 0 14 20">
        <path d="M3 0h6v2h2v17H1V2h2z" fill="none" stroke="#d9d5cc" strokeWidth="1.500" />
        <path d="M4 9h5M4 12h5M7 15l6-5" stroke="#d9d5cc" />
      </svg>
      <svg className="ml-[10px] mr-[16px]" width="10" height="6" viewBox="0 0 10 6"><path d="M0 0h10L5 6z" fill="#c9c5bc" /></svg>
    </div>
  </div>
);

const TitleBar = () => (
  <div className={`h-[52px] shrink-0 bg-[linear-gradient(180deg,#3c3b37_0%,#504c45_100%)] relative flex items-end pl-[5px] gap-[12.7px] text-[14.5px] text-[#dfdbd2] ${UI}`}>
    {["File", "Edit", "View", "Insert", "Format", "Tools", "Modify", "Window", "Help"].map((m) => (
      <span key={m}>{m}</span>
    ))}
    <div className="absolute right-[5px] top-[6px] flex gap-[4px]">
      <div className="w-[16px] h-[16px] rounded-full bg-[#6f6c65] flex items-center justify-center"><div className="w-[8px] h-[2px] bg-[#3c3b37]" /></div>
      <div className="w-[16px] h-[16px] rounded-full bg-[#6f6c65] flex items-center justify-center"><div className="w-[7px] h-[7px] border border-[#3c3b37]" /></div>
      <div className="w-[16px] h-[16px] rounded-full bg-[#e9592d] flex items-center justify-center">
        <svg width="8" height="8" viewBox="0 0 8 8"><path d="M1 1l6 6M7 1L1 7" stroke="#4a2412" strokeWidth="1.200" /></svg>
      </div>
    </div>
    {/* zoom meeting bar floats above the window */}
    <div className="absolute left-[713px] top-0 h-[22px] flex text-[12px]">
      <div className="w-[242px] bg-[#22d25f] flex items-center text-[#0d3a1c] pl-[15px]">
        <svg width="12" height="12" viewBox="0 0 12 12"><path d="M11 1C6 1 2 4 1 7l3 1-1 3c3-1 6-4 8-10z" fill="#0d5a26" /></svg>
        <span className="ml-[12px]">You are screen sharing</span>
        <svg className="ml-[7px]" width="17" height="13" viewBox="0 0 17 13"><path d="M4 12a3 3 0 010-6c0-3 3-5 5-5s4 2 4 4a3.500 3.500 0 010 7z" fill="none" stroke="#0d5a26" /></svg>
        <svg className="ml-[18px]" width="11" height="13" viewBox="0 0 11 13"><path d="M5.500 0L11 2v4c0 3-2 6-5.500 7C2 12 0 9 0 6V2z" fill="#0d5a26" /></svg>
      </div>
      <div className="w-[116px] bg-[#ff3b40] rounded-br-[2px] flex items-center justify-center text-white">
        <span>Stop Share</span>
        <div className="ml-[7px] w-[8px] h-[8px] rounded-[1px] bg-white" />
      </div>
    </div>
  </div>
);

export default function App() {
  return (
    <div className={`relative w-[1920px] h-[1080px] overflow-hidden flex flex-col bg-[#f2f1f0] ${UI}`}>
      <TopBar />
      <div className="flex-1 flex min-h-0">
        <Dock />
        <div className="flex-1 min-w-0 flex flex-col">
          <TitleBar />
          <MainToolbar />
          <div className="flex-1 min-h-0 flex">
            <DrawToolbar />
            <div className="flex-1 min-w-0 flex flex-col">
              <div className="h-[4px] shrink-0" />
              <HRuler />
              <div className="flex-1 min-h-0 flex">
                <VRuler />
                <Canvas />
                <div className="w-[8px] shrink-0 relative">
                  <div className="absolute left-0 w-[7px] top-[233px] h-[454px] bg-[#f28e65]" />
                </div>
              </div>
              <div className="h-[7px] shrink-0 pl-[9px] pr-[8px]"><div className="h-[7px] bg-[#f28e65]" /></div>
              <TabBar />
            </div>
            <Sidebar />
          </div>
          <FindBar />
          <StatusBar />
        </div>
      </div>
      <div className={`absolute left-[1696px] top-[150px] w-[212px] h-[30px] bg-[#262f3b] text-[#e6e8ea] text-[14.5px] leading-[28px] pl-[5px] ${UI}`}>Talking:</div>
    </div>
  );
}
